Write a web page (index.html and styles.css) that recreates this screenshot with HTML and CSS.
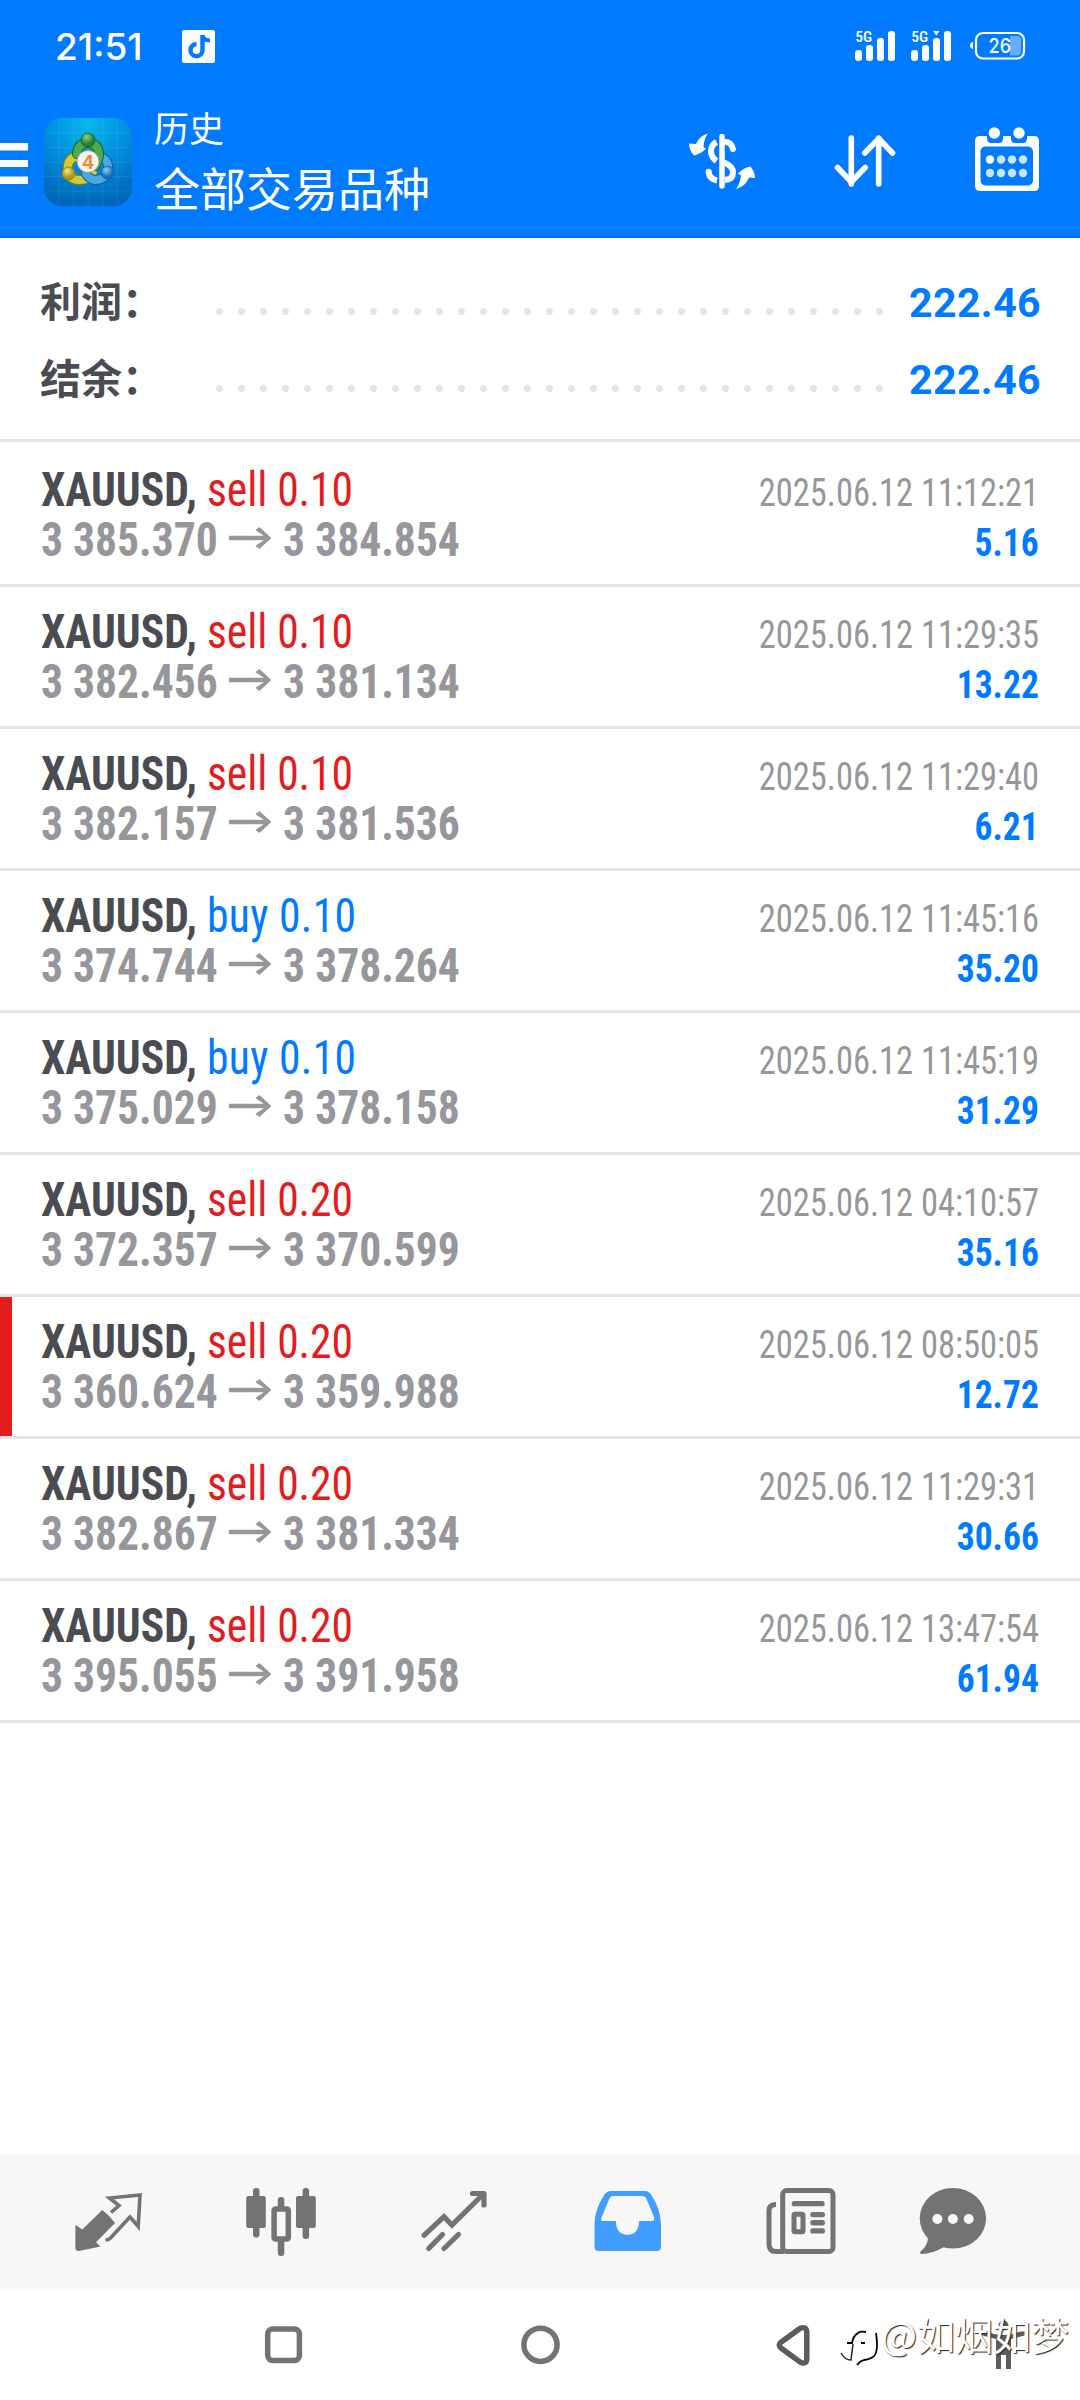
FILE: index.html
```html
<!DOCTYPE html>
<html lang="zh-CN">
<head>
<meta charset="utf-8">
<title>历史</title>
<link rel="stylesheet" href="styles.css">
</head>
<body>
<svg width="0" height="0" class="defs"><symbol id="to" viewBox="0 0 43 22" preserveAspectRatio="none"><path d="M0 8.700h35.500L26.800 3.200 31 0l12 11-12 11-4.200-3.200 8.700-5.500H0z" fill="#96969b"/></symbol></svg>
<div class="screen">
  <header class="header">
    <div class="status">
      <span class="clock">21:51</span>
      <svg class="note" width="33" height="33" viewBox="0 0 33 33"><rect width="33" height="33" rx="2" fill="#fff"/><path d="M20.500 5v15.200a6 6 0 1 1-6-6" fill="none" stroke="#007aff" stroke-width="4.500"/><path d="M20.500 5c.5 3.500 3 5.500 7.500 5.500" fill="none" stroke="#007aff" stroke-width="4"/></svg>
      <div class="status-right">
        <svg class="signal" width="41" height="30" viewBox="0 0 41 30"><g fill="#fff"><rect x="0" y="19" width="7" height="11" rx="3.300"/><rect x="11" y="14" width="7" height="16" rx="3"/><rect x="22" y="7" width="7" height="23" rx="3"/><rect x="33" y="0" width="7" height="30" rx="3"/></g><text x="0.300" y="11" textLength="17" lengthAdjust="spacingAndGlyphs" class="net">5G</text></svg>
        <svg class="signal" width="41" height="30" viewBox="0 0 41 30"><g fill="#fff"><rect x="0" y="19" width="7" height="11" rx="3.300"/><rect x="11" y="14" width="7" height="16" rx="3"/><rect x="22" y="7" width="7" height="23" rx="3"/><rect x="33" y="0" width="7" height="30" rx="3"/><path d="M22 0h6.500l-3.200 4.500z"/></g><text x="0.300" y="11" textLength="17" lengthAdjust="spacingAndGlyphs" class="net">5G</text></svg>
        <svg class="battery" width="56" height="28" viewBox="0 0 56 28"><path d="M3 10v7q-3-1-3-3.500t3-3.500z" fill="#fff"/><rect x="6" y="1" width="48" height="25.500" rx="7" fill="none" stroke="#fff" stroke-width="2.200"/><path d="M40 4h7q4 0 4 4v11.500q0 4-4 4h-7z" fill="#66afff"/><text x="18.500" y="20.700" textLength="22.500" lengthAdjust="spacingAndGlyphs" class="level">26</text></svg>
      </div>
    </div>
    <div class="appbar">
      <svg class="menu" width="28" height="41" viewBox="0 0 28 41"><path d="M0 0h28v7.500H0zM0 17h28v7H0zM0 33.500h28v7.500H0z" fill="#fff"/></svg>
      <svg class="logo" width="88" height="88" viewBox="0 0 88 88">
        <defs>
          <radialGradient id="bg" cx=".5" cy=".05" r="1"><stop offset="0" stop-color="#08b8ee"/><stop offset=".5" stop-color="#008cdc"/><stop offset="1" stop-color="#0062b4"/></radialGradient>
          <radialGradient id="gn" cx=".4" cy=".3"><stop offset="0" stop-color="#8ed08a"/><stop offset="1" stop-color="#26802f"/></radialGradient>
          <radialGradient id="ye" cx=".4" cy=".3"><stop offset="0" stop-color="#f3e98a"/><stop offset="1" stop-color="#a99a14"/></radialGradient>
          <radialGradient id="bl" cx=".4" cy=".3"><stop offset="0" stop-color="#8dd0f5"/><stop offset="1" stop-color="#1672b5"/></radialGradient>
        </defs>
        <rect width="88" height="88" rx="18" fill="url(#bg)"/>
        <path d="M15 1v86M29.500 0v88M44 0v88M59 0v88M73 1v86M1 15h86M0 29.500h88M0 44h88M0 58.500h88M1 73h86" stroke="#fff" stroke-opacity=".08" fill="none"/>
        <g fill="none" stroke-linecap="round">
          <path d="M32 39q-8 1-8.500 12 1 11 12 11 9 0 13-7" stroke="#857a10" stroke-width="10"/>
          <path d="M32 39q-8 1-8.500 12 1 11 12 11 9 0 13-7" stroke="#d5c936" stroke-width="8"/>
          <path d="M59 40q6 3 5 13-3 9-13 9-6-1-9-6" stroke="#0e5a98" stroke-width="10"/>
          <path d="M59 40q6 3 5 13-3 9-13 9-6-1-9-6" stroke="#49a9e3" stroke-width="8"/>
          <path d="M33 36q1-11 11-11t11 11q0 6-4 12" stroke="#185f25" stroke-width="10"/>
          <path d="M33 36q1-11 11-11t11 11q0 6-4 12" stroke="#4faa4c" stroke-width="8"/>
        </g>
        <circle cx="44" cy="22" r="7" fill="url(#gn)" stroke="#185f25" stroke-width=".8"/><circle cx="24.500" cy="55.500" r="6.500" fill="url(#ye)" stroke="#857a10" stroke-width=".8"/><circle cx="63.500" cy="54.500" r="6.500" fill="url(#bl)" stroke="#0e5a98" stroke-width=".8"/>
        <circle cx="44" cy="43.500" r="11" fill="#f4f4f4" stroke="#8b9086" stroke-width=".8"/>
        <text x="44" y="50.500" text-anchor="middle" class="four">4</text>
      </svg>
      <div class="titles"><div class="title">历史</div><div class="subtitle">全部交易品种</div></div>
      <div class="actions">
        <svg width="90" height="80" viewBox="0 0 90 80">
          <g fill="none" stroke="#fff" stroke-width="5.500" stroke-linecap="round"><path d="M42 16.500v49.500"/><path d="M46 22q5.500.5 7 7" stroke-width="6"/><path d="M36.500 22Q31 25 31 31t5.500 10" stroke-width="6" stroke-linecap="butt"/><path d="M44 42.500q9 3.500 9 10 0 7-8 7.500" stroke-width="6" stroke-linecap="butt"/><path d="M28.500 52q1 7 8.500 8.500" stroke-width="6" stroke-linecap="butt"/></g>
          <circle cx="28.600" cy="51.700" r="3" fill="#fff"/>
          <path d="M28 13.500Q24 18 23.500 27l2.500 1.800q-5 5-12 6.700Q9 30 9 23.500l7 .5Q19.500 15.500 28 13.500z" fill="#fff"/>
          <path d="M56 69q4-5 5-13.500l-3-2q6-6 12.500-7Q75 52 75 58l-6-.5Q65.500 66.500 56 69z" fill="#fff"/>
        </svg>
        <svg width="70" height="60" viewBox="0 0 70 60"><path d="M21.300 9v46M7.500 38.500l13.800 14.500 13.900-14.500M48.700 55V9M34.800 24l13.900-14.500L62.500 24" fill="none" stroke="#fff" stroke-width="5.600" stroke-linecap="round" stroke-linejoin="round"/></svg>
        <svg width="64" height="66" viewBox="0 0 64 66">
          <path d="M5 9h7v2q0 5 4 5h8q4 0 4-5V9h8v2q0 5 4 5h8q4 0 4-5V9h7q5 0 5 5v45q0 5-5 5H5q-5 0-5-5V14q0-5 5-5z" fill="#fff"/><rect x="5.500" y="19.500" width="52.500" height="39" rx="5" fill="#007aff"/>
          <circle cx="19.300" cy="6" r="5.700" fill="#fff"/><circle cx="44" cy="6" r="5.700" fill="#fff"/>
          <circle cx="15" cy="32.500" r="4.200" fill="#fff"/><g fill="#cce4ff"><circle cx="26" cy="32.500" r="4.200"/><circle cx="37" cy="32.500" r="4.200"/><circle cx="48" cy="32.500" r="4.200"/><circle cx="15" cy="46" r="4.200"/><circle cx="26" cy="46" r="4.200"/><circle cx="37" cy="46" r="4.200"/><circle cx="48" cy="46" r="4.200"/></g>
        </svg>
      </div>
    </div>
  </header>

  <section class="summary">
    <div class="sum-row"><span class="sum-label">利润：</span><span class="leader"></span><span class="sum-value">222.46</span></div>
    <div class="sum-row"><span class="sum-label">结余：</span><span class="leader"></span><span class="sum-value">222.46</span></div>
  </section>

  <main class="deals">
    <article class="deal"><div class="line"><span class="sym">XAUUSD, <span class="sell">sell 0.10</span></span><span class="date">2025.06.12 11:12:21</span></div><div class="line"><span class="price">3 385.370 <svg class="arrow"><use href="#to"/></svg> 3 384.854</span><span class="profit">5.16</span></div></article>
    <article class="deal"><div class="line"><span class="sym">XAUUSD, <span class="sell">sell 0.10</span></span><span class="date">2025.06.12 11:29:35</span></div><div class="line"><span class="price">3 382.456 <svg class="arrow"><use href="#to"/></svg> 3 381.134</span><span class="profit">13.22</span></div></article>
    <article class="deal"><div class="line"><span class="sym">XAUUSD, <span class="sell">sell 0.10</span></span><span class="date">2025.06.12 11:29:40</span></div><div class="line"><span class="price">3 382.157 <svg class="arrow"><use href="#to"/></svg> 3 381.536</span><span class="profit">6.21</span></div></article>
    <article class="deal"><div class="line"><span class="sym">XAUUSD, <span class="buy">buy 0.10</span></span><span class="date">2025.06.12 11:45:16</span></div><div class="line"><span class="price">3 374.744 <svg class="arrow"><use href="#to"/></svg> 3 378.264</span><span class="profit">35.20</span></div></article>
    <article class="deal"><div class="line"><span class="sym">XAUUSD, <span class="buy">buy 0.10</span></span><span class="date">2025.06.12 11:45:19</span></div><div class="line"><span class="price">3 375.029 <svg class="arrow"><use href="#to"/></svg> 3 378.158</span><span class="profit">31.29</span></div></article>
    <article class="deal"><div class="line"><span class="sym">XAUUSD, <span class="sell">sell 0.20</span></span><span class="date">2025.06.12 04:10:57</span></div><div class="line"><span class="price">3 372.357 <svg class="arrow"><use href="#to"/></svg> 3 370.599</span><span class="profit">35.16</span></div></article>
    <article class="deal marked"><div class="line"><span class="sym">XAUUSD, <span class="sell">sell 0.20</span></span><span class="date">2025.06.12 08:50:05</span></div><div class="line"><span class="price">3 360.624 <svg class="arrow"><use href="#to"/></svg> 3 359.988</span><span class="profit">12.72</span></div></article>
    <article class="deal"><div class="line"><span class="sym">XAUUSD, <span class="sell">sell 0.20</span></span><span class="date">2025.06.12 11:29:31</span></div><div class="line"><span class="price">3 382.867 <svg class="arrow"><use href="#to"/></svg> 3 381.334</span><span class="profit">30.66</span></div></article>
    <article class="deal"><div class="line"><span class="sym">XAUUSD, <span class="sell">sell 0.20</span></span><span class="date">2025.06.12 13:47:54</span></div><div class="line"><span class="price">3 395.055 <svg class="arrow"><use href="#to"/></svg> 3 391.958</span><span class="profit">61.94</span></div></article>
  </main>

  <nav class="tabs">
    <svg width="173" height="135" viewBox="22 0 173 135"><path d="M75.400 70l6.900 4.500 20-19.500Q109 60 115 68L96 87.300l4.500 4.200-21.500 4.500q-3.600 0-3.600-3z" fill="#737373"/><path d="M111 57.500l8-7-9.500-7.500 30.500-3-1.800 31.500-8.200-9.500-20 21.500q-1.500 1.500-4.500 1.500" fill="none" stroke="#737373" stroke-width="3.600"/></svg>
    <svg width="173" height="135" viewBox="195 0 173 135"><g fill="#737373"><rect x="253" y="33" width="6.500" height="49.500" rx="3"/><rect x="246.200" y="41" width="19.600" height="32" rx="2"/><rect x="302.600" y="33" width="6.500" height="51" rx="3"/><rect x="296" y="41" width="19.800" height="32" rx="2"/><rect x="277.800" y="42" width="6.500" height="12" rx="3"/><rect x="277.800" y="84" width="6.500" height="17" rx="3"/></g><rect x="274.100" y="53.900" width="14.200" height="30" rx="1.500" fill="none" stroke="#737373" stroke-width="5.500"/></svg>
    <svg width="173" height="135" viewBox="368 0 173 135"><g fill="none" stroke="#737373" stroke-width="5.200" stroke-linecap="round"><path d="M424 80.300l20-18.600 7.900 8.300L483.500 39"/><path d="M472.500 38.500H484v11.500" stroke-linejoin="round"/><path d="M428.700 93.500L442.500 79.500M444 93.500L458.500 79.500"/></g></svg>
    <svg width="173" height="135" viewBox="541 0 173 135"><path fill-rule="evenodd" d="M611 36h34q4 0 6 3.500 9.500 14 10 30V92q0 4-4 4h-58.500q-4 0-4-4V68q.8-15 10-28.500 2.500-3.500 6.500-3.500zM613.500 41q-3 0-4.200 3L601.500 62.500q-1.200 3.500 1.500 3.500H616q0 13.700 11.500 13.700T639 66h12.500q4 0 2.300-4.500L646.500 44q-1-3-4.500-3z" fill="#419dff"/></svg>
    <svg width="173" height="135" viewBox="714 0 173 135"><g fill="none" stroke="#737373" stroke-width="5"><rect x="782.700" y="35.500" width="50.300" height="61" rx="4"/><path d="M776 49.500q-7 0-7 6V89q0 7.500 7 7.500h8"/><rect x="794" y="59.300" width="9" height="17.400" rx="1"/></g><g fill="#737373"><rect x="791.700" y="46" width="33" height="5.300" rx="2.600"/><rect x="810.300" y="57" width="14.700" height="5.200" rx="2.600"/><rect x="810.300" y="65.100" width="14.700" height="5.300" rx="2.600"/><rect x="810.300" y="73.300" width="14.700" height="5.300" rx="2.600"/></g></svg>
    <svg width="173" height="135" viewBox="887 0 173 135"><ellipse cx="952.900" cy="63.300" rx="33.200" ry="30.300" fill="#737373"/><path d="M928 82q0 8.500-7.500 14.500-1 2 1 2.500Q932 99 944 92z" fill="#737373"/><g fill="#f7f7f7"><circle cx="937.400" cy="64" r="5"/><circle cx="952.900" cy="64" r="5"/><circle cx="968.700" cy="64" r="5"/></g></svg>
  </nav>

  <footer class="system">
    <svg width="257" height="110" viewBox="154.500 0 257 110"><rect x="267.200" y="39" width="31.700" height="31.600" rx="5" fill="none" stroke="#737373" stroke-width="5.500"/></svg>
    <svg width="257" height="110" viewBox="411.500 0 257 110"><circle cx="540" cy="54.800" r="16.600" fill="none" stroke="#737373" stroke-width="5.500"/></svg>
    <svg width="257" height="110" viewBox="668.500 0 257 110"><path d="M799.500 38.500Q806.300 35.500 806.300 43V68Q806.300 75.500 799.500 72L780.500 58Q777 55 780.500 52.200z" fill="none" stroke="#5c5c5c" stroke-width="5.500"/></svg>
    <svg width="154.500" height="110" viewBox="925.500 0 154.500 110"><path d="M982 41.500h4q9 3.500 17 3.500t17-3.500h4v4l-13.500 3.500V79h-5V65h-5V79h-5V49L982 45.500z" fill="#5c5c5c"/><circle cx="1003" cy="35.500" r="5" fill="#5c5c5c"/></svg>
    <div class="watermark">
      <svg width="40" height="42" viewBox="0 0 40 42"><path d="M1 28q4 7 10 7l2-16" fill="none" stroke="#222" stroke-width="1.500"/><path d="M7 18h5q1-7 6-10 3-2 8-1M21 18h4" fill="none" stroke="#000" stroke-width="1.800"/><path d="M36 8q3 20-3 24-4 2.500-9 3-4 1-7 5" fill="none" stroke="#000" stroke-width="1.800"/></svg><span>@如烟如梦</span>
    </div>
  </footer>
</div>
</body>
</html>
```
FILE: styles.css
```css
* { box-sizing: border-box; }
body { margin: 0; background: #fff; font-family: Roboto, "Noto Sans CJK SC", sans-serif; }
svg { display: block; flex: none; overflow: visible; }
.defs { display: none; }
.screen { width: 1080px; height: 2400px; display: flex; flex-direction: column; overflow: hidden; }

.header { height: 238px; background: #007aff; border-bottom: 2px solid #0070e8; color: #fff; flex: none; }
.status { height: 92px; display: flex; align-items: center; padding: 0 54px 0 55px; }
.clock { font-family: Inter, sans-serif; font-size: 37px; font-weight: 450; letter-spacing: 0; line-height: 44px; width: 127px; padding-top: 1px; }
.status-right { margin-left: auto; display: flex; gap: 15px; align-items: center; }
.battery { margin-left: 3px; }
.net { font: 500 14.500px "Roboto Condensed", sans-serif; fill: #fff; }
.level { font: 500 20px Inter, sans-serif; fill: #fff; }
.appbar { height: 144px; display: flex; align-items: flex-start; }
.menu { margin-top: 51px; }
.logo { margin: 26px 0 0 16px; }
.four { font: 700 20px "Liberation Sans", sans-serif; fill: #f08a1c; }
.titles { margin: 9px 0 0 22px; font-family: "Noto Sans CJK SC", sans-serif; font-weight: 400; }
.title { font-size: 35px; line-height: 52px; }
.subtitle { font-size: 46px; line-height: 66px; }
.actions { margin: 28px 41px 0 auto; display: flex; align-items: flex-start; }
.actions svg:nth-child(2) { margin: 9px 0 0 60px; }
.actions svg:nth-child(3) { margin: 7px 0 0 75px; }

.summary { height: 204px; border-bottom: 3px solid #e5e5e5; padding: 25px 39px 0 40px; flex: none; }
.sum-row { display: flex; height: 77px; align-items: center; }
.sum-label { width: 174px; font: 700 41px/73px "Noto Sans CJK SC", sans-serif; color: #4b4b52; padding-bottom: 4px; }
.leader { width: 682px; height: 7px; margin-top: 19px; background: radial-gradient(circle at 5.400px 3.500px, #e5e5e5 3.200px, transparent 3.900px) 0 0 / 22px 7px; }
.sum-value { margin-left: auto; font-size: 41px; font-weight: 700; color: #007aff; line-height: 77px; padding-top: 3px; letter-spacing: .4px; }

.deals { flex: 1; padding-top: 3px; font-family: "Roboto Condensed", sans-serif; }
.deal { height: 142px; padding: 20px 41px 0; border-bottom: 3px solid #e5e5e5; }
.line { display: flex; justify-content: space-between; align-items: baseline; height: 50px; line-height: 50px; white-space: pre; }
.sym, .price { font-size: 48px; font-weight: 700; transform: scaleX(.907); transform-origin: 0 50%; }
.sym { color: #4b4b52; }
.sell, .buy { font-weight: 400; }
.sell { color: #e31c1e; }
.buy { color: #007aff; letter-spacing: .4px; }
.price { color: #96969b; }
.arrow { display: inline-block; width: 47px; height: 22px; margin: 0 1.500px; vertical-align: 7px; }
.date, .profit { font-size: 38px; transform: scaleX(.907); transform-origin: 100% 50%; }
.date { color: #96969b; }
.profit { font-weight: 700; color: #007aff; transform: scaleX(.935); }
.marked { background: linear-gradient(#e31c1e, #e31c1e) 0 0 / 12px 100% no-repeat; }

.tabs { height: 135px; background: #f7f7f7; display: flex; padding-left: 22px; flex: none; }
.system { height: 110px; display: flex; padding-left: 154.500px; position: relative; flex: none; }
.watermark { position: absolute; left: 840px; top: 16px; height: 56px; display: flex; align-items: center; color: #fff; font: 400 38px/56px "Noto Sans CJK SC", sans-serif; text-shadow: 1px 1px 1px #222; }
.watermark svg { margin: 24px 1px 0 0; }
```
